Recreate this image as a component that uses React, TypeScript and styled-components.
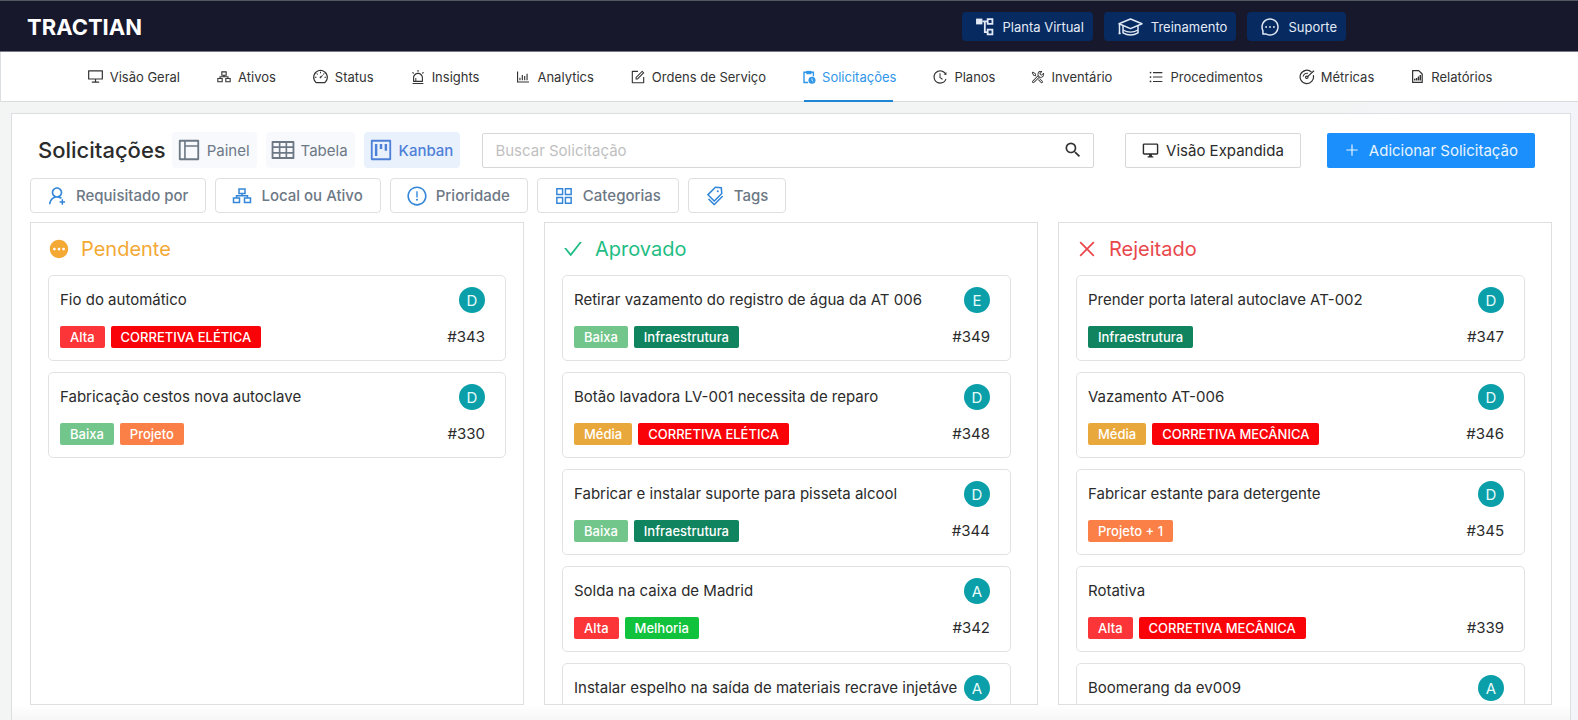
import React from 'react';
import styled, { createGlobalStyle } from 'styled-components';
import {
  AiOutlineAlert,
  AiOutlineAppstore,
  AiOutlineBarChart,
  AiOutlineCheck,
  AiOutlineClose,
  AiOutlineDashboard,
  AiOutlineDesktop,
  AiOutlineExclamationCircle,
  AiOutlineForm,
  AiOutlineHistory,
  AiOutlineLayout,
  AiOutlineMessage,
  AiOutlinePlus,
  AiOutlineProject,
  AiOutlineTable,
  AiOutlineTags,
  AiOutlineUnorderedList,
  AiOutlineUserAdd,
} from 'react-icons/ai';
import { MdOutlineDesktopWindows, MdPending, MdSearch } from 'react-icons/md';
import { VscTools } from 'react-icons/vsc';

const GlobalStyle = createGlobalStyle`
  *, *::before, *::after { box-sizing: border-box; }
  html, body, #root { height: 100%; }
  body {
    margin: 0;
    background: linear-gradient(to right, #f3f5f5 85%, #f3f4fa);
    color: #2b2b2b;
    font-family: Inter, "Liberation Sans", sans-serif;
    font-size: 15px;
  }
  button, input { font: inherit; color: inherit; }
  svg { flex: none; display: block; }
`;

type IconProps = { size?: number };

const BlocksIcon = ({ size = 16 }: IconProps) => (
  <svg width={size} height={size} viewBox="0 0 22 22" fill="none" stroke="currentColor" strokeWidth="1.5">
    <path d="M8 4h6v4.500H8zM2.500 13h6v4.500h-6zM13.500 13h6v4.500h-6zM11 8.500v2.200M5.500 13v-2.300h11V13" />
  </svg>
);

const ClipboardClockIcon = ({ size = 16 }: IconProps) => (
  <svg width={size} height={size} viewBox="0 0 16 16" fill="none" stroke="currentColor" strokeWidth="1.6">
    <path d="M7 14.200H2.300V2.500h10.700V7" />
    <path d="M4.800 1h6v3.800h-6z" fill="currentColor" stroke="none" />
    <circle cx="11.400" cy="11.700" r="4" fill="currentColor" stroke="none" />
    <path d="M11.400 9.500v2.400l1.500 1.200" stroke="#fff" strokeWidth="0.900" />
  </svg>
);

const MetricsIcon = ({ size = 16 }: IconProps) => (
  <svg width={size} height={size} viewBox="0 0 16 16" fill="none" stroke="currentColor" strokeWidth="1.200">
    <path d="M14.300 6.200A6.700 6.700 0 1 1 12.500 3.100" />
    <path d="M8.600 7.600 15 1.800M4.200 7.500a4 4 0 0 1 4.600-3.200" />
    <circle cx="7.800" cy="8.300" r="1.200" />
  </svg>
);

const ReportIcon = ({ size = 16 }: IconProps) => (
  <svg width={size} height={size} viewBox="0 0 16 16" fill="none" stroke="currentColor" strokeWidth="1.300">
    <path d="M2.800 1.700h6.500l3.700 3.600v9H2.800z" strokeLinejoin="round" />
    <path d="M5 12.200V10.500M7 12.200V9.500M9 12.200V8M11 12.200V6.500" strokeWidth="1.500" />
  </svg>
);

const PlantIcon = ({ size = 18 }: IconProps) => (
  <svg width={size} height={size} viewBox="0 0 18 18" fill="none" stroke="currentColor" strokeWidth="1.700">
    <path d="M1 1.500h6v5.500H1z" fill="currentColor" stroke="none" />
    <path d="M12 2h4.500v4.500H12zM12 12h4.500v4.500H12zM7 4.200h5M9.300 4.200v10.100H12" />
  </svg>
);

const GraduationIcon = ({ size = 26 }: IconProps) => (
  <svg width={size} height={size} viewBox="0 0 26 26" fill="none" stroke="currentColor" strokeWidth="1.500" strokeLinejoin="round">
    <path d="M13.500 5 25 9.800 13.500 14.600 2 9.800z" />
    <path d="M6 12v6.800c4.500 2.600 10.500 2.600 15 0V12" />
    <path d="M6 16c4.500 2.600 10.500 2.600 15 0" strokeWidth="1.200" />
    <path d="M2.500 10v9M1.500 19.500h2.200" />
  </svg>
);

const Page = styled.div`
  display: flex;
  flex-direction: column;
  height: 100%;
  min-height: 480px;
  overflow: hidden;
`;

const TopBar = styled.header`
  display: flex;
  align-items: center;
  justify-content: space-between;
  height: 52px;
  flex: none;
  padding: 1px 232px 0 27px;
  background: #18182c;
  border-top: 1px solid #515762;
  border-bottom: 1px solid #777986;
`;

const Logo = styled.a`
  color: #fff;
  font-size: 22px;
  font-weight: 700;
  line-height: 24px;
  text-decoration: none;
`;

const TopActions = styled.div`
  display: flex;
  gap: 11px;
`;

const TopButton = styled.button`
  display: flex;
  align-items: center;
  gap: 8px;
  height: 29px;
  padding: 0 9px 0 13px;
  border: 0;
  border-radius: 4px;
  background: #072a60;
  color: #e3eaf6;
  font-size: 13px;
  white-space: nowrap;
`;

const NavBar = styled.nav`
  display: flex;
  justify-content: center;
  gap: 36px;
  height: 50px;
  flex: none;
  background: #fff;
  border-left: 1px solid #dcdfe2;
  border-bottom: 1px solid #d9dcdd;
`;

const NavLink = styled.a<{ $active?: boolean }>`
  position: relative;
  display: flex;
  align-items: center;
  gap: 6px;
  color: ${p => (p.$active ? '#2f96e8' : '#333')};
  font-size: 13px;
  text-decoration: none;
  white-space: nowrap;

  &::after {
    content: '';
    display: ${p => (p.$active ? 'block' : 'none')};
    position: absolute;
    left: 2px;
    right: 3px;
    bottom: -1px;
    height: 2px;
    background: #1f86d6;
  }
`;

const Panel = styled.main`
  display: flex;
  flex-direction: column;
  flex: 1;
  min-height: 0;
  margin: 11px 7px 0 11px;
  padding: 18px 18px 15px;
  background: linear-gradient(to top, #f6f6f6, #fff 15px);
  border: 1px solid #dcdfe2;
  border-bottom: 0;
`;

const Toolbar = styled.div`
  display: flex;
  align-items: center;
  height: 36px;
  flex: none;
  padding: 0 17px 0 8px;
`;

const Title = styled.h1`
  margin: 0 6px 0 0;
  font-size: 22px;
  font-weight: 500;
  line-height: 28px;
`;

const Views = styled.div`
  display: flex;
  gap: 9px;
  margin-right: 22px;
`;

const ViewButton = styled.button<{ $active?: boolean }>`
  display: flex;
  align-items: center;
  gap: 5px;
  height: 36px;
  padding: 0 7px 0 4px;
  border: 0;
  border-radius: 4px;
  background: ${p => (p.$active ? '#e9f1fd' : '#f7f9fd')};
  color: ${p => (p.$active ? '#4f80d8' : '#6d7885')};
  font-size: 15px;
  font-weight: ${p => (p.$active ? 500 : 400)};
`;

const SearchBox = styled.label`
  display: flex;
  align-items: center;
  flex: 1;
  height: 35px;
  margin-right: 31px;
  padding: 0 10px;
  border: 1px solid #d6d8da;
  border-radius: 2px;
  background: #fff;
  color: #333;
`;

const SearchInput = styled.input`
  flex: 1;
  min-width: 0;
  border: 0;
  outline: 0;
  background: transparent;
  font-size: 15px;

  &::placeholder { color: #bfbfbf; }
`;

const ExpandButton = styled.button`
  display: flex;
  align-items: center;
  gap: 7px;
  height: 35px;
  margin-right: 26px;
  padding: 0 16px;
  border: 1px solid #d6d8da;
  border-radius: 2px;
  background: #fff;
  font-size: 15px;
  white-space: nowrap;
`;

const AddButton = styled.button`
  display: flex;
  align-items: center;
  gap: 9px;
  height: 35px;
  padding: 0 17px;
  border: 0;
  border-radius: 2px;
  background: #1b8ffb;
  color: #e8f4ff;
  font-size: 15px;
  white-space: nowrap;
`;

const Filters = styled.div`
  display: flex;
  flex: none;
  gap: 9px;
  margin: 10px 0 9px;
`;

const FilterButton = styled.button`
  display: flex;
  align-items: center;
  gap: 8px;
  height: 35px;
  padding: 0 17px 0 15px;
  border: 1px solid #dddfe1;
  border-radius: 4px;
  background: #fff;
  color: #6d7885;
  font-size: 15px;
  font-weight: 500;
  white-space: nowrap;

  svg { color: #3487d8; }
`;

const Board = styled.div`
  display: grid;
  grid-template-columns: repeat(3, minmax(0, 1fr));
  gap: 20px;
  flex: 1;
  min-height: 0;
`;

const Column = styled.section`
  display: flex;
  flex-direction: column;
  min-height: 0;
  padding: 0 17px;
  border: 1px solid #dddfe1;
  background: #fff;
`;

const ColumnTitle = styled.h2<{ $color: string }>`
  display: flex;
  align-items: center;
  gap: 11px;
  height: 52px;
  flex: none;
  margin: 0;
  color: ${p => p.$color};
  font-size: 20px;
  font-weight: 400;
`;

const CardList = styled.ul<{ $scrolls: boolean }>`
  display: flex;
  flex-direction: column;
  gap: 11px;
  flex: 1;
  min-height: 0;
  margin: 0;
  padding: 0 ${p => (p.$scrolls ? 9 : 0)}px 0 0;
  overflow-y: auto;
  scrollbar-width: none;
  list-style: none;
`;

const CardItem = styled.li`
  flex: none;
  padding: 11px 20px 12px 11px;
  border: 1px solid #e0e2e4;
  border-radius: 5px;
  background: #fff;
`;

const CardRow = styled.div`
  display: flex;
  align-items: center;
  justify-content: space-between;
  gap: 7px;
  min-height: 22px;

  & + & { margin-top: 13px; }
`;

const CardTitle = styled.h3`
  margin: 0;
  min-width: 0;
  font-size: 15px;
  font-weight: 400;
  line-height: 26px;
  white-space: nowrap;
`;

const Avatar = styled.span`
  display: flex;
  align-items: center;
  justify-content: center;
  width: 26px;
  height: 26px;
  flex: none;
  border-radius: 50%;
  background: #0a9fa9;
  color: #e8fbfb;
  font-size: 15px;
`;

const Tags = styled.div`
  display: flex;
  gap: 6px;
`;

const Tag = styled.span<{ $color: string }>`
  padding: 0 10px;
  border-radius: 2px;
  background: ${p => p.$color};
  color: #fff;
  font-size: 13px;
  font-weight: 500;
  line-height: 22px;
  white-space: nowrap;
`;

const CardNumber = styled.span`
  font-size: 15px;
  line-height: 22px;
`;

const tagColors: Record<string, string> = {
  Alta: '#fb3538',
  Média: '#e9a83c',
  Baixa: '#72c68c',
  Melhoria: '#11c23d',
  Infraestrutura: '#10845f',
  Projeto: '#fb8048',
  'Projeto + 1': '#fb8048',
  'CORRETIVA ELÉTICA': '#fa0308',
  'CORRETIVA MECÂNICA': '#fa0308',
};

const navItems = [
  { label: 'Visão Geral', icon: <AiOutlineDesktop size={17} /> },
  { label: 'Ativos', icon: <BlocksIcon size={16} /> },
  { label: 'Status', icon: <AiOutlineDashboard size={17} /> },
  { label: 'Insights', icon: <AiOutlineAlert size={16} /> },
  { label: 'Analytics', icon: <AiOutlineBarChart size={16} /> },
  { label: 'Ordens de Serviço', icon: <AiOutlineForm size={16} /> },
  { label: 'Solicitações', icon: <ClipboardClockIcon size={14} />, active: true },
  { label: 'Planos', icon: <AiOutlineHistory size={16} /> },
  { label: 'Inventário', icon: <VscTools size={14} /> },
  { label: 'Procedimentos', icon: <AiOutlineUnorderedList size={16} /> },
  { label: 'Métricas', icon: <MetricsIcon size={16} /> },
  { label: 'Relatórios', icon: <ReportIcon size={15} /> },
];

const filters = [
  { label: 'Requisitado por', icon: <AiOutlineUserAdd size={22} /> },
  { label: 'Local ou Ativo', icon: <BlocksIcon size={22} /> },
  { label: 'Prioridade', icon: <AiOutlineExclamationCircle size={22} /> },
  { label: 'Categorias', icon: <AiOutlineAppstore size={22} /> },
  { label: 'Tags', icon: <AiOutlineTags size={22} /> },
];

type Card = { title: string; id?: number; tags?: string[]; user?: string };

const columns: { title: string; color: string; icon: React.ReactNode; cards: Card[] }[] = [
  {
    title: 'Pendente',
    color: '#f3a934',
    icon: <MdPending size={22} />,
    cards: [
      { title: 'Fio do automático', id: 343, user: 'D', tags: ['Alta', 'CORRETIVA ELÉTICA'] },
      { title: 'Fabricação cestos nova autoclave', id: 330, user: 'D', tags: ['Baixa', 'Projeto'] },
    ],
  },
  {
    title: 'Aprovado',
    color: '#1fbd84',
    icon: <AiOutlineCheck size={22} />,
    cards: [
      { title: 'Retirar vazamento do registro de água da AT 006', id: 349, user: 'E', tags: ['Baixa', 'Infraestrutura'] },
      { title: 'Botão lavadora LV-001 necessita de reparo', id: 348, user: 'D', tags: ['Média', 'CORRETIVA ELÉTICA'] },
      { title: 'Fabricar e instalar suporte para pisseta alcool', id: 344, user: 'D', tags: ['Baixa', 'Infraestrutura'] },
      { title: 'Solda na caixa de Madrid', id: 342, user: 'A', tags: ['Alta', 'Melhoria'] },
      { title: 'Instalar espelho na saída de materiais recrave injetáve', user: 'A' },
    ],
  },
  {
    title: 'Rejeitado',
    color: '#e9474c',
    icon: <AiOutlineClose size={22} />,
    cards: [
      { title: 'Prender porta lateral autoclave AT-002', id: 347, user: 'D', tags: ['Infraestrutura'] },
      { title: 'Vazamento AT-006', id: 346, user: 'D', tags: ['Média', 'CORRETIVA MECÂNICA'] },
      { title: 'Fabricar estante para detergente', id: 345, user: 'D', tags: ['Projeto + 1'] },
      { title: 'Rotativa', id: 339, tags: ['Alta', 'CORRETIVA MECÂNICA'] },
      { title: 'Boomerang da ev009', user: 'A' },
    ],
  },
];

export default function App() {
  return (
    <Page>
      <GlobalStyle />
      <TopBar>
        <Logo href="#">TRACTIAN</Logo>
        <TopActions>
          <TopButton><PlantIcon size={19} />Planta Virtual</TopButton>
          <TopButton><GraduationIcon size={26} />Treinamento</TopButton>
          <TopButton><AiOutlineMessage size={20} />Suporte</TopButton>
        </TopActions>
      </TopBar>
      <NavBar>
        {navItems.map(item => (
          <NavLink key={item.label} href="#" $active={item.active}>
            {item.icon}
            {item.label}
          </NavLink>
        ))}
      </NavBar>
      <Panel>
        <Toolbar>
          <Title>Solicitações</Title>
          <Views>
            <ViewButton><AiOutlineLayout size={26} />Painel</ViewButton>
            <ViewButton><AiOutlineTable size={26} />Tabela</ViewButton>
            <ViewButton $active><AiOutlineProject size={26} />Kanban</ViewButton>
          </Views>
          <SearchBox>
            <SearchInput type="text" aria-label="Buscar Solicitação" placeholder="Buscar Solicitação" />
            <MdSearch size={20} />
          </SearchBox>
          <ExpandButton><MdOutlineDesktopWindows size={17} />Visão Expandida</ExpandButton>
          <AddButton><AiOutlinePlus size={16} />Adicionar Solicitação</AddButton>
        </Toolbar>
        <Filters>
          {filters.map(f => (
            <FilterButton key={f.label}>{f.icon}{f.label}</FilterButton>
          ))}
        </Filters>
        <Board>
          {columns.map(column => (
            <Column key={column.title}>
              <ColumnTitle $color={column.color}>{column.icon}{column.title}</ColumnTitle>
              <CardList $scrolls={column.cards.length > 4}>
                {column.cards.map(card => (
                  <CardItem key={card.title}>
                    <CardRow>
                      <CardTitle>{card.title}</CardTitle>
                      {card.user && <Avatar>{card.user}</Avatar>}
                    </CardRow>
                    <CardRow>
                      <Tags>
                        {card.tags?.map(tag => (
                          <Tag key={tag} $color={tagColors[tag]}>{tag}</Tag>
                        ))}
                      </Tags>
                      {card.id && <CardNumber>#{card.id}</CardNumber>}
                    </CardRow>
                  </CardItem>
                ))}
              </CardList>
            </Column>
          ))}
        </Board>
      </Panel>
    </Page>
  );
}
